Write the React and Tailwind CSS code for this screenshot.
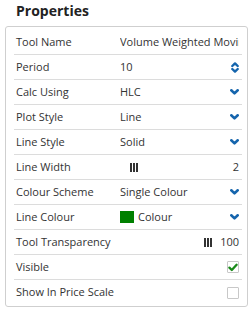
const font = { fontFamily: '"Open Sans", "Liberation Sans", sans-serif' };

function Chevron() {
    return (
        <svg width="9" height="6" viewBox="0 0 9 6" className="block">
            <path d="M1.3 1.3 L4.5 4.4 L7.7 1.3" fill="none" stroke="#1565ad" strokeWidth="2.6" strokeLinecap="round" strokeLinejoin="round" />
        </svg>
    );
}

function Spinner() {
    return (
        <svg width="8" height="11" viewBox="0 0 8 11" className="block">
            <path d="M1.3 4 L4 1.4 L6.7 4" fill="none" stroke="#1565ad" strokeWidth="2.4" strokeLinecap="round" strokeLinejoin="round" />
            <path d="M1.3 7 L4 9.6 L6.7 7" fill="none" stroke="#1565ad" strokeWidth="2.4" strokeLinecap="round" strokeLinejoin="round" />
        </svg>
    );
}

function Grip() {
    return (
        <span className="flex gap-[1px] items-center">
            <span className="w-[2px] h-[9px] bg-[#333]" />
            <span className="w-[2px] h-[9px] bg-[#333]" />
            <span className="w-[2px] h-[9px] bg-[#333]" />
        </span>
    );
}

function Checkbox({ checked }) {
    return (
        <span className="w-[12px] h-[12px] border border-[#c8c8c8] rounded-[1px] bg-white flex items-center justify-center">
            {checked && (
                <svg width="10" height="9" viewBox="0 0 10 9">
                    <path d="M1.4 4.6 L3.8 7 L8.6 1.8" fill="none" stroke="#1a8a1a" strokeWidth="2.3" strokeLinecap="round" strokeLinejoin="round" />
                </svg>
            )}
        </span>
    );
}

function Row({ label, children, right, last }) {
    return (
        <div className={`flex items-center h-[25px] pl-[2px] pr-[3px] ${last ? '' : 'border-b border-[#dcdcdc]'}`}>
            <div className="w-[104px] shrink-0 whitespace-nowrap">{label}</div>
            <div className="flex-1 min-w-0 flex items-center overflow-hidden whitespace-nowrap">{children}</div>
            {right && <div className="shrink-0 flex items-center">{right}</div>}
        </div>
    );
}

export default function App() {
    return (
        <div className="w-[252px] h-[309px] bg-white text-[#333] overflow-hidden" style={font}>
            {/* Header */}
            <div className="pl-[16px] pt-[1px] h-[26px] text-[14px] font-bold text-[#222] leading-[20px]">Properties</div>

            <div className="ml-[5px] w-[243px] h-[281px] border border-[#cfcfcf] rounded-[3px] pt-[3px] pl-[8px] pr-[5px] text-[11px]">
                <Row label="Tool Name">
                    <span className="overflow-hidden">Volume Weighted Moving Average</span>
                </Row>
                <Row label="Period" right={<Spinner />}>10</Row>
                <Row label="Calc Using" right={<Chevron />}>HLC</Row>
                <Row label="Plot Style" right={<Chevron />}>Line</Row>
                <Row label="Line Style" right={<Chevron />}>Solid</Row>
                <Row label="Line Width" right={<span>2</span>}>
                    <span className="ml-[10px]"><Grip /></span>
                </Row>
                <Row label="Colour Scheme" right={<Chevron />}>Single Colour</Row>
                <Row label="Line Colour" right={<Chevron />}>
                    <span className="w-[14px] h-[12px] bg-[#008000] mr-[4px]" />
                    <span>Colour</span>
                </Row>
                <Row label="Tool Transparency" right={
                    <span className="flex items-center gap-[8px]"><Grip /><span>100</span></span>
                } />
                <Row label="Visible" right={<Checkbox checked />} />
                <Row label="Show In Price Scale" right={<Checkbox />} last />
            </div>
        </div>
    );
}
